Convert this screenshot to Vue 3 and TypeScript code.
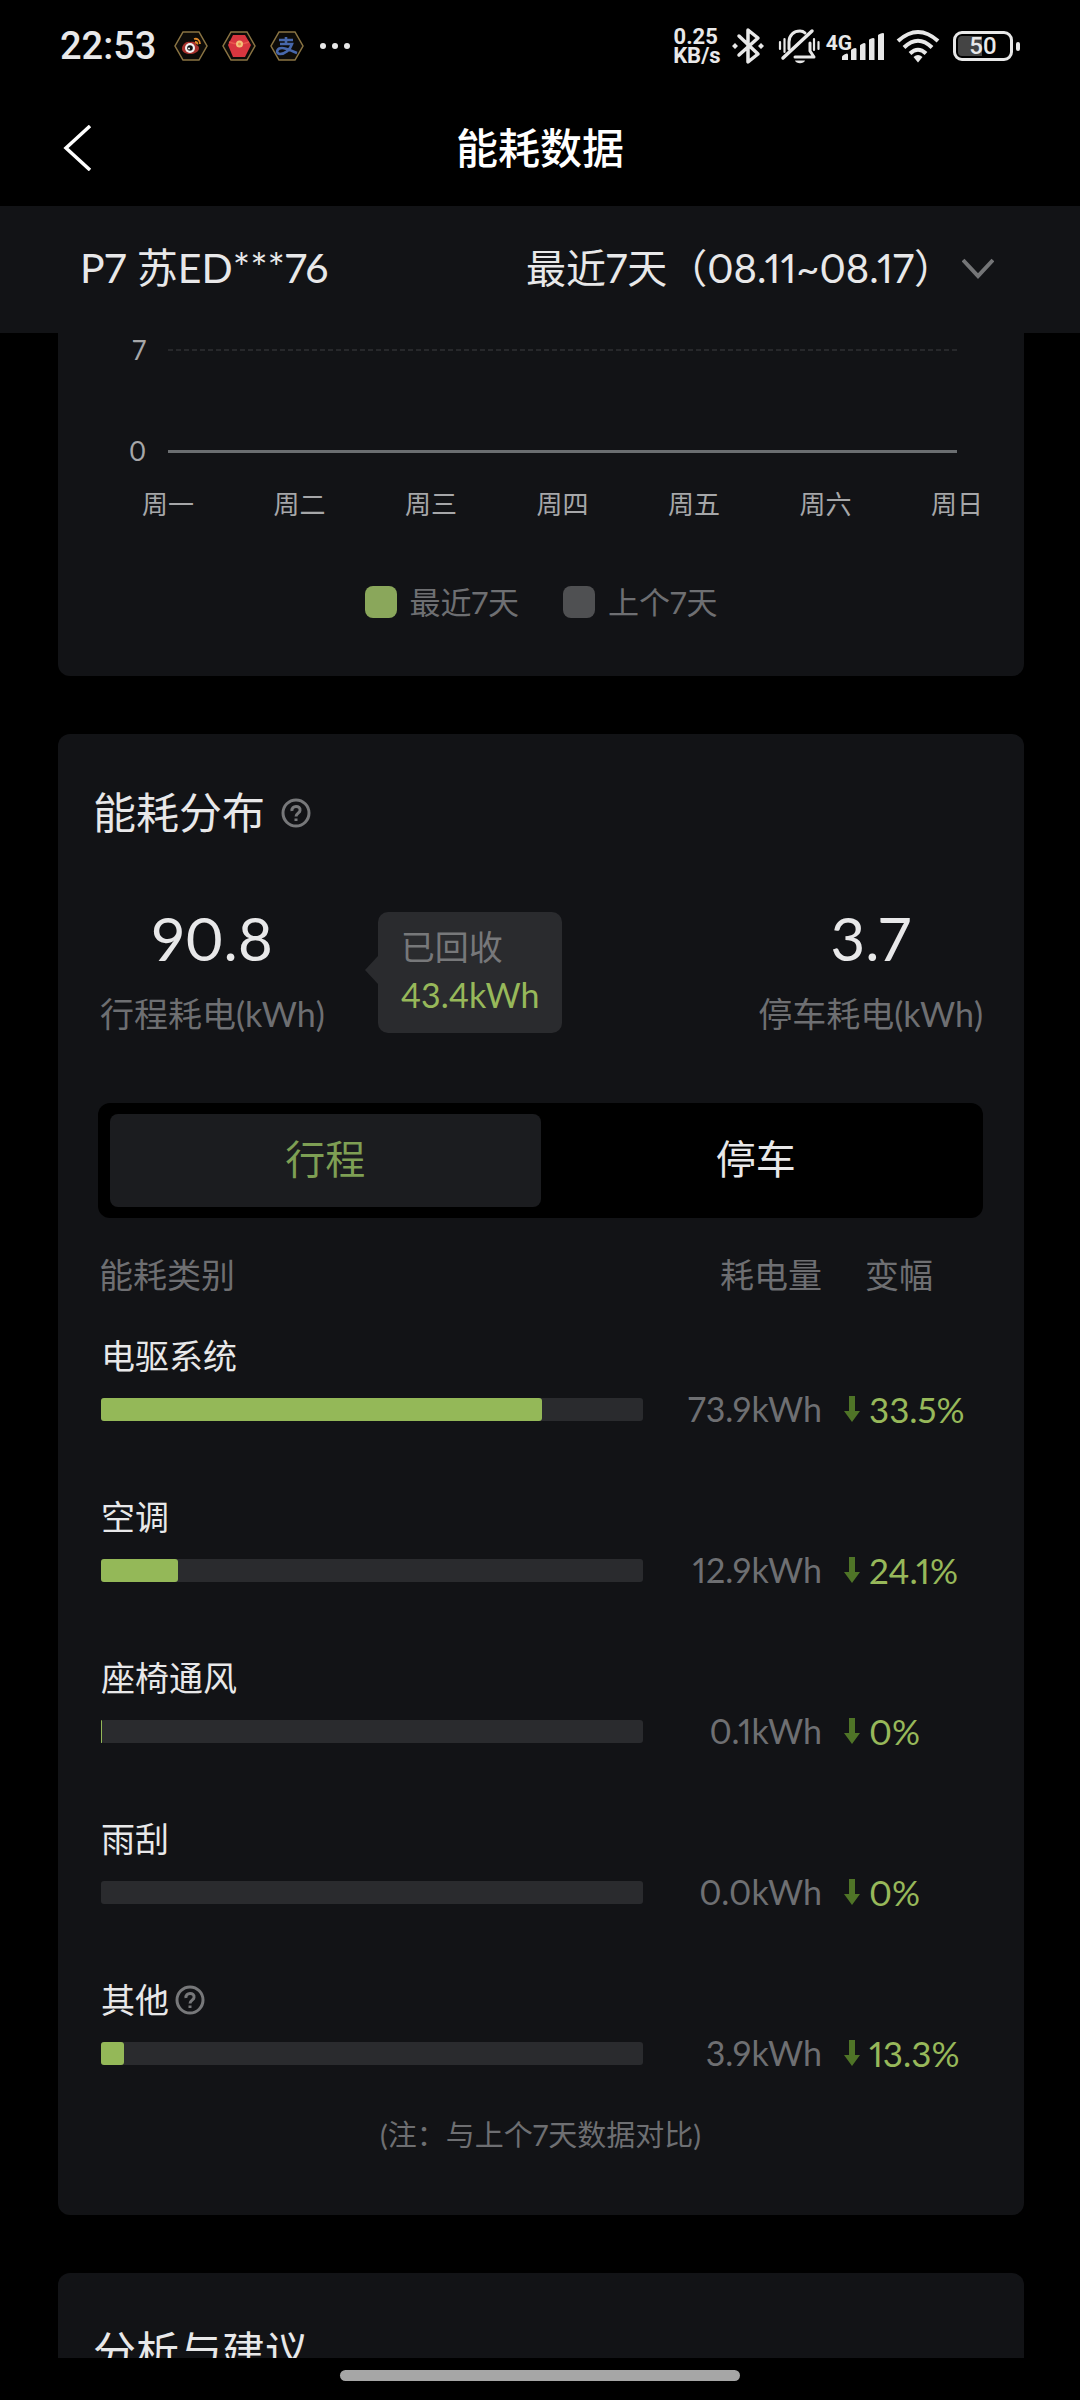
<script setup lang="ts">
import { ref } from 'vue'

interface UsageRow {
  name: string
  share: number
  energy: string
  change: string
  help?: boolean
}

const ticks = [
  { label: '7', base: false },
  { label: '0', base: true },
]
const days = ['周一', '周二', '周三', '周四', '周五', '周六', '周日']
const period = ref('week')
const tab = ref<'trip' | 'park'>('trip')

const rows: UsageRow[] = [
  { name: '电驱系统', share: 81.4, energy: '73.9kWh', change: '33.5%' },
  { name: '空调', share: 14.2, energy: '12.9kWh', change: '24.1%' },
  { name: '座椅通风', share: 0.2, energy: '0.1kWh', change: '0%' },
  { name: '雨刮', share: 0, energy: '0.0kWh', change: '0%' },
  { name: '其他', share: 4.3, energy: '3.9kWh', change: '13.3%', help: true },
]
</script>

<template>
  <div class="app">
    <div class="status">
      <div class="status-left">
        <span class="clock">22:53</span>
        <!-- weibo -->
        <svg class="hex" viewBox="0 0 34 30" width="34" height="30">
          <path d="M9 1H25L33 15L25 29H9L1 15Z" fill="#0d0b08" stroke="#8a7443" stroke-width="1.5" />
          <path d="M16 11C12 10 8 14 8 18c0 3 4 5 8 5s9-2 9-6c0-2-2-3-3-3 1-3-3-4-6-3Z" fill="#a8322e" />
          <circle cx="16" cy="17" r="5" fill="#f2f2f2" />
          <circle cx="16" cy="17" r="2.8" fill="#111" />
          <circle cx="15" cy="17.5" r="1" fill="#fff" />
          <path d="M20 8c3-1 6 1 6 5M21 11c1.500 0 2.500 1 2.500 2.500" fill="none" stroke="#e28a2b" stroke-width="1.8" />
        </svg>
        <!-- red packet -->
        <svg class="hex" viewBox="0 0 34 30" width="34" height="30">
          <path d="M9 1H25L33 15L25 29H9L1 15Z" fill="#0d0b08" stroke="#8a7443" stroke-width="1.5" />
          <path d="M11 4H23L29 14L23 26H11L6 14Z" fill="#d8363f" />
          <path d="M7 11Q17 15 27 11" fill="none" stroke="#e9584e" stroke-width="1.5" />
          <circle cx="17.500" cy="13" r="3.5" fill="#f4c27a" />
          <circle cx="17.500" cy="13" r="1.5" fill="#e88a4a" />
        </svg>
        <!-- alipay -->
        <svg class="hex" viewBox="0 0 34 30" width="34" height="30">
          <path d="M9 1H25L33 15L25 29H9L1 15Z" fill="#0d0b08" stroke="#8a7443" stroke-width="1.5" />
          <path d="M9 9H23M16 6V13M10 13H22C20 19 15 23 10 23C5 22 7 17 12 17C17 17 21 20 27 22" fill="none" stroke="#4767ab" stroke-width="2.6" />
        </svg>
        <svg class="dots" viewBox="0 0 32 8" width="32" height="8" fill="#e8e8e8">
          <circle cx="4" cy="4" r="3" /><circle cx="16" cy="4" r="3" /><circle cx="28" cy="4" r="3" />
        </svg>
      </div>
      <div class="status-right">
        <div class="speed">0.25<br>KB/s</div>
        <!-- bluetooth -->
        <svg viewBox="0 0 34 38" width="34" height="38" fill="none" stroke="#e8e8e8" stroke-width="3.5" stroke-linejoin="round" stroke-linecap="round">
          <path d="M8 9L27 27L17 35V3L27 11L8 28" />
          <path d="M4 16l3 3-3 3-3-3ZM30 16l3 3-3 3-3-3Z" fill="#e8e8e8" stroke="none" />
        </svg>
        <!-- muted bell -->
        <svg class="bell" viewBox="0 0 42 38" width="42" height="38" fill="none" stroke="#e8e8e8" stroke-width="3" stroke-linecap="round">
          <path d="M5 31L34 4" stroke-width="3.5" />
          <path d="M11 22V15C11 8 16 4 22 4C24 4 26 5 27 6" />
          <path d="M17 30H36L32 24V16" stroke-linejoin="round" />
          <path d="M17 33.500H27C26 37 18 37 17 33.500Z" fill="#e8e8e8" stroke="none" />
          <path d="M2 15V22M6.500 12V25M36 12V23M40.500 15V22" stroke-width="2.2" />
        </svg>
        <!-- mobile signal -->
        <div class="signal">
          <span>4G</span>
          <svg viewBox="0 0 42 27" width="42" height="27" fill="#e8e8e8">
            <path d="M0 24Q0 22 5 20.500Q6 20.500 6 22V27H0ZM9 17.500Q9 16 13 15Q14.500 15 14.500 16V27H9ZM18 12.500Q18 11.500 22 10Q23.500 10 23.500 11V27H18ZM27 7Q27 6 31 5Q32.500 5 32.500 6V27H27ZM36 2.500Q36 1 41 0Q42 0 42 1V27H36Z" />
          </svg>
        </div>
        <!-- wifi -->
        <svg viewBox="0 0 44 34" width="44" height="34" fill="none" stroke="#e8e8e8" stroke-width="4">
          <path d="M2 12Q22 -6 42 12M8 18.500Q22 5 36 18.500M14 24.500Q22 17 30 24.500" />
          <path d="M17.500 28Q22 24 26.500 28L22 33.500Z" fill="#e8e8e8" stroke="none" />
        </svg>
        <div class="battery"><span class="cell"><span class="pct">50</span></span><span class="nub"></span></div>
      </div>
    </div>

    <header class="header">
      <button class="back" type="button" aria-label="返回">
        <svg viewBox="0 0 30 46" width="30" height="46" fill="none" stroke="#fff" stroke-width="3.5"><path d="M28 1L4 23L28 45" /></svg>
      </button>
      <h1>能耗数据</h1>
    </header>

    <div class="filter">
      <span class="car">P7 苏ED***76</span>
      <label class="period">
        <select v-model="period" aria-label="统计周期">
          <option value="week">最近7天（08.11~08.17）</option>
        </select>
        <svg viewBox="0 0 32 22" width="32" height="22" fill="none" stroke="#747577" stroke-width="4"><path d="M1 3L16 19L31 3" /></svg>
      </label>
    </div>

    <main class="scroll">
      <section class="card chart">
        <div v-for="t in ticks" :key="t.label" class="tick">
          <span>{{ t.label }}</span>
          <i :class="{ base: t.base }"></i>
        </div>
        <div class="days"><span v-for="d in days" :key="d">{{ d }}</span></div>
        <div class="legend">
          <span class="key">最近7天</span>
          <span class="key previous">上个7天</span>
        </div>
      </section>

      <section class="card usage">
        <h2>
          能耗分布
          <button class="help" type="button" aria-label="说明">
            <svg viewBox="0 0 30 30" width="30" height="30" fill="none" stroke="#77787a" stroke-width="3"><circle cx="15" cy="15" r="13" /><path d="M11 13C10 7 20 7 19 12.500C19 15 15 15.500 15 18.500M15 20.500V23" /></svg>
          </button>
        </h2>
        <div class="body">
          <div class="stats">
            <div class="stat"><strong>90.8</strong><span>行程耗电(kWh)</span></div>
            <div class="bubble"><span>已回收</span><b>43.4kWh</b></div>
            <div class="stat last"><strong>3.7</strong><span>停车耗电(kWh)</span></div>
          </div>

          <div class="tabs">
            <button type="button" :class="{ active: tab === 'trip' }" @click="tab = 'trip'">行程</button>
            <button type="button" :class="{ active: tab === 'park' }" @click="tab = 'park'">停车</button>
          </div>

          <table>
            <thead>
              <tr>
                <th class="category" scope="col">能耗类别</th>
                <th class="energy" scope="col">耗电量</th>
                <th class="change" scope="col">变幅</th>
              </tr>
            </thead>
            <tbody>
              <tr v-for="r in rows" :key="r.name">
                <th class="category" scope="row">
                  <div class="name">
                    {{ r.name }}
                    <button v-if="r.help" class="help" type="button" aria-label="说明">
                      <svg viewBox="0 0 30 30" width="30" height="30" fill="none" stroke="#77787a" stroke-width="3"><circle cx="15" cy="15" r="13" /><path d="M11 13C10 7 20 7 19 12.500C19 15 15 15.500 15 18.500M15 20.500V23" /></svg>
                    </button>
                  </div>
                  <div class="track"><div class="fill" :style="{ width: r.share + '%' }"></div></div>
                </th>
                <td class="energy">{{ r.energy }}</td>
                <td class="change">
                  <div class="delta">
                    <svg viewBox="0 0 16 26" width="16" height="26"><path d="M5 0H11V15H16L8 26L0 15H5Z" fill="#4f7427" /></svg>
                    {{ r.change }}
                  </div>
                </td>
              </tr>
            </tbody>
          </table>
          <p class="note">(注：与上个7天数据对比)</p>
        </div>
      </section>

      <section class="card advice">
        <h2>分析与建议</h2>
      </section>
    </main>

    <div class="gesture"><span></span></div>
  </div>
</template>

<style>
body {
  background: #000;
}
</style>

<style scoped>
.app {
  display: flex;
  flex-direction: column;
  height: 100vh;
  background: #000;
  color: #e8e8e9;
  font-family: Lato, "Noto Sans CJK SC", sans-serif;
  font-variant-numeric: proportional-nums;
  overflow: hidden;
}
svg {
  display: block;
  flex: none;
}
button {
  border: 0;
  padding: 0;
  background: none;
  color: inherit;
  font: inherit;
}
h1, h2, p {
  margin: 0;
}

.status {
  flex: none;
  height: 92px;
  display: flex;
  align-items: center;
  justify-content: space-between;
  padding: 0 60px;
  font-family: Roboto, sans-serif;
}
.status-left, .status-right {
  display: flex;
  align-items: center;
}
.clock {
  font-size: 38px;
  font-weight: 500;
  line-height: 40px;
  margin-right: 18px;
}
.hex {
  margin-right: 14px;
}
.dots {
  margin-left: 1px;
}
.speed {
  font-size: 22px;
  font-weight: 700;
  line-height: 19px;
  margin-right: 10px;
}
.bell {
  margin-left: 13px;
}
.signal {
  display: flex;
  align-items: flex-end;
  margin: 0 12px 0 6px;
}
.signal span {
  font-size: 21px;
  font-weight: 700;
  line-height: 20px;
  align-self: flex-start;
  margin-right: -10px;
}
.battery {
  display: flex;
  align-items: center;
  gap: 3px;
  margin-left: 13px;
}
.cell {
  box-sizing: border-box;
  width: 60px;
  height: 30px;
  border: 3px solid #e8e8e8;
  border-radius: 9px;
  padding: 2px;
  display: flex;
}
.pct {
  flex: 1;
  border-radius: 4px;
  background: linear-gradient(90deg, #444 48%, transparent 48%);
  font-size: 24px;
  font-weight: 500;
  line-height: 20px;
  text-align: center;
}
.nub {
  width: 4px;
  height: 9px;
  border-radius: 2px;
  background: #e8e8e8;
}

.header {
  flex: none;
  height: 114px;
  box-sizing: border-box;
  padding: 0 62px 2px;
  display: grid;
  grid-template-columns: 1fr auto 1fr;
  align-items: center;
}
.back {
  justify-self: start;
}
h1 {
  font-size: 42px;
  font-weight: 500;
  line-height: 60px;
  color: #fff;
}

.filter {
  flex: none;
  height: 127px;
  box-sizing: border-box;
  padding: 0 86px 4px 80px;
  display: flex;
  align-items: center;
  justify-content: space-between;
  background: #121316;
  font-size: 40px;
  line-height: 60px;
}
.car {
  font-size: 41px;
}
.period {
  display: flex;
  align-items: center;
  gap: 8px;
}
select {
  appearance: none;
  border: 0;
  padding: 0;
  background: none;
  color: inherit;
  font: inherit;
}

.scroll {
  flex: 1;
  min-height: 0;
  overflow: hidden;
}
.card {
  margin: 0 56px 58px 58px;
  border-radius: 12px;
  background: #121316;
}
.chart {
  border-radius: 0 0 12px 12px;
  padding-bottom: 54px;
}
.tick {
  display: flex;
  align-items: center;
  gap: 22px;
  height: 34px;
  padding-right: 67px;
  font-size: 26px;
  color: #a6a7a9;
}
.tick + .tick {
  margin-top: 67px;
}
.tick span {
  width: 88px;
  text-align: right;
}
.tick i {
  flex: 1;
  height: 2px;
  background: repeating-linear-gradient(90deg, #27282b 0 5px, transparent 5px 8px);
}
.tick i.base {
  height: 3px;
  background: #6b6e71;
}
.days {
  display: flex;
  justify-content: space-between;
  margin-top: 16px;
  padding: 0 41px 0 84px;
  font-size: 26px;
  line-height: 40px;
  color: #a6a7a9;
}
.legend {
  display: flex;
  justify-content: center;
  gap: 44px;
  margin-top: 58px;
  font-size: 31px;
  line-height: 40px;
  color: #6e6f72;
}
.key {
  display: flex;
  align-items: center;
  gap: 13px;
}
.key::before {
  content: "";
  width: 32px;
  height: 32px;
  border-radius: 8px;
  background: #8aa75b;
}
.key.previous::before {
  background: #4f5052;
}

h2 {
  display: flex;
  align-items: center;
  gap: 16px;
  padding: 51px 36px 0 35px;
  font-size: 43px;
  font-weight: 400;
  line-height: 56px;
}
.usage {
  padding-bottom: 60px;
}
.body {
  padding: 0 41px 0 40px;
}
.stats {
  display: flex;
  align-items: flex-start;
  margin-top: 59px;
  padding-left: 2px;
}
.stat {
  display: flex;
  flex-direction: column;
  align-items: center;
  gap: 14px;
  font-size: 34px;
  line-height: 48px;
  color: #6e6f72;
}
.stat.last {
  margin-left: auto;
}
.stat strong {
  font-size: 60px;
  font-weight: 400;
  line-height: 76px;
  color: #e8e8e9;
}
.bubble {
  position: relative;
  display: flex;
  flex-direction: column;
  margin: 12px 0 0 53px;
  padding: 11px 22px 14px 23px;
  border-radius: 10px;
  background: #2a2b2e;
  font-size: 34px;
  line-height: 48px;
  color: #77787a;
}
.bubble::before {
  content: "";
  position: absolute;
  left: -13px;
  top: 44px;
  border: solid transparent;
  border-width: 14px 13px 14px 0;
  border-right-color: #2a2b2e;
}
.bubble b {
  font-weight: 400;
  color: #97b85a;
}
.tabs {
  display: flex;
  margin-top: 65px;
  padding: 11px 12px;
  border-radius: 12px;
  background: #000;
}
.tabs button {
  flex: 1;
  height: 93px;
  border-radius: 8px;
  font-size: 40px;
  line-height: 60px;
  padding-bottom: 4px;
}
.tabs .active {
  background: #1b1c1f;
  color: #7e9f54;
}

table {
  width: 100%;
  table-layout: fixed;
  border-collapse: collapse;
  margin-top: 33px;
  font-size: 34px;
  line-height: 48px;
  color: #6e6f72;
}
th, td {
  padding: 0;
  font-weight: 400;
  text-align: left;
}
thead .category {
  padding-left: 1px;
}
tbody .category {
  padding: 33px 0 39px 3px;
}
th.energy, td.energy {
  width: 179px;
  text-align: right;
}
.change {
  width: 161px;
  padding-left: 22px;
  box-sizing: border-box;
}
thead .change {
  padding-left: 43px;
}
tbody td {
  vertical-align: bottom;
  padding-bottom: 27px;
}
.name {
  display: flex;
  align-items: center;
  gap: 6px;
  color: #e8e8e9;
}
.track {
  height: 23px;
  margin-top: 18px;
  border-radius: 3px;
  background: #2a2b2e;
}
.fill {
  height: 100%;
  border-radius: 3px;
  background: #94b858;
}
.delta {
  display: flex;
  align-items: center;
  gap: 9px;
  font-size: 35px;
  color: #97b85a;
}
.note {
  margin-top: 11px;
  font-size: 29px;
  line-height: 40px;
  text-align: center;
  color: #6e6f72;
}

.gesture {
  flex: none;
  height: 42px;
  display: flex;
  align-items: flex-start;
  justify-content: center;
}
.gesture span {
  width: 37%;
  height: 11px;
  margin-top: 12px;
  border-radius: 6px;
  background: #a6a6a6;
}
</style>
